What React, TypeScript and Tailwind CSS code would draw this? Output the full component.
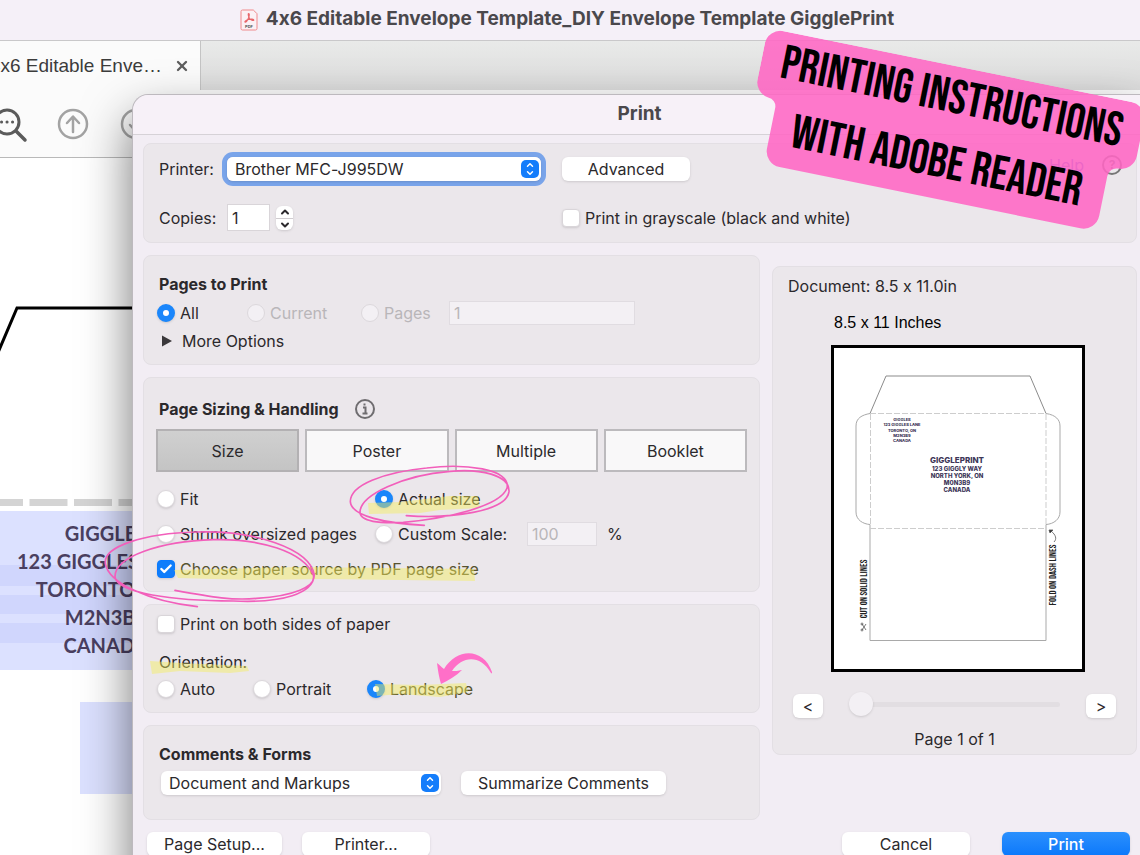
import { useState } from 'react'
import type { InputHTMLAttributes, ReactNode } from 'react'
import { Check, ChevronDown, ChevronUp, X } from 'lucide-react'
import clsx from 'clsx'

const SIZING_TABS = ['Size', 'Poster', 'Multiple', 'Booklet']

const RETURN_ADDRESS = ['GIGGLES', '123 GIGGLES LANE', 'TORONTO, ON', 'M2N3B9', 'CANADA']

interface ChoiceProps extends InputHTMLAttributes<HTMLInputElement> {
  label: string
  labelClass?: string
}

function Radio({ label, labelClass, ...props }: ChoiceProps) {
  return (
    <label className="flex h-6 items-center gap-[5px] whitespace-nowrap has-disabled:text-[#b9b6b9]">
      <input
        type="radio"
        className="size-[18px] shrink-0 appearance-none rounded-full border border-[#dcd8dc] bg-white shadow-sm checked:border-[6px] checked:border-[#1a86fb] disabled:bg-[#f3f0f4] disabled:shadow-none"
        {...props}
      />
      <span className={labelClass}>{label}</span>
    </label>
  )
}

function Checkbox({ label, labelClass, ...props }: ChoiceProps) {
  return (
    <label className="flex h-6 items-center gap-[5px] whitespace-nowrap">
      <span className="grid shrink-0 place-items-center">
        <input
          type="checkbox"
          className="peer col-start-1 row-start-1 size-[18px] appearance-none rounded border border-[#d9d5d9] bg-white shadow-sm checked:border-[#0a7aff] checked:bg-[#0f7dfb]"
          {...props}
        />
        <Check
          className="pointer-events-none invisible col-start-1 row-start-1 size-3.5 text-white peer-checked:visible"
          strokeWidth={4}
        />
      </span>
      <span className={labelClass}>{label}</span>
    </label>
  )
}

function PopupSelect({ id, value, className }: { id: string; value: string; className?: string }) {
  return (
    <div className={clsx('grid items-center', className)}>
      <select
        id={id}
        defaultValue={value}
        className="col-start-1 row-start-1 h-6 w-full appearance-none rounded-md bg-white px-2 shadow outline-none"
      >
        <option>{value}</option>
      </select>
      <span className="pointer-events-none col-start-1 row-start-1 mr-0.5 flex size-[18px] flex-col items-center justify-center justify-self-end rounded-[5px] bg-[#147dfb] text-white">
        <ChevronUp className="-mb-0.5 size-2.5" strokeWidth={3.5} />
        <ChevronDown className="size-2.5" strokeWidth={3.5} />
      </span>
    </div>
  )
}

function PushButton({ children, className }: { children: ReactNode; className?: string }) {
  return (
    <button
      type="button"
      className={clsx('h-6 shrink-0 rounded-md text-center leading-6 whitespace-nowrap shadow', className)}
    >
      {children}
    </button>
  )
}

function Group({ children, className }: { children: ReactNode; className?: string }) {
  return (
    <section className={clsx('rounded-lg border border-[#e3dfe4] bg-[#ebe7eb]', className)}>
      {children}
    </section>
  )
}

function TitleBar() {
  return (
    <header className="flex h-10 shrink-0 items-center justify-center gap-2 bg-[#f5f0f8] pt-px pr-1.5 pb-0.5 text-[19px] font-bold whitespace-nowrap text-[#4a484c]">
      <svg viewBox="0 0 18 22" className="h-[22px] w-[18px]" fill="none">
        <path
          d="M2.5 1h10.8L17 4.7v14.8a1.5 1.5 0 0 1-1.5 1.5h-13A1.5 1.5 0 0 1 1 19.5v-17A1.5 1.5 0 0 1 2.5 1Z"
          fill="#fbf1f5"
          stroke="#f08a8c"
        />
        <path
          d="M8.6 4.5c1 0 .8 2.6-.2 4.7-.9 2-2.3 4.1-3.2 3.9-1-.3.8-2 3.4-2.6 2.5-.6 5.2-.5 5.2.4 0 1-2.3.6-3.9-1.1C8.5 8.2 7.8 4.5 8.6 4.5Z"
          stroke="#e8666a"
          strokeWidth="1.2"
        />
        <text x="9" y="18.5" textAnchor="middle" fontSize="4" fontWeight="700" fill="#555">
          PDF
        </text>
      </svg>
      <h1>4x6 Editable Envelope Template_DIY Envelope Template GigglePrint</h1>
    </header>
  )
}

function TabStrip() {
  return (
    <div className="flex h-[50px] shrink-0 border-t border-[#c9c8ca] bg-linear-to-b from-[#e9eae9] to-[#dcdcdc]">
      <div className="flex w-[201px] items-center justify-end gap-3 overflow-hidden border-r border-[#c4c4c4] bg-[#fbfbfb] pt-px pr-2.5 font-['Liberation_Sans',sans-serif] text-[19px] whitespace-nowrap text-[#3c3c3c]">
        <span>4x6 Editable Enve…</span>
        <button type="button" aria-label="Close tab">
          <X className="size-4 text-[#5e5e5e]" strokeWidth={3.5} />
        </button>
      </div>
    </div>
  )
}

function Toolbar() {
  return (
    <div className="h-[68px] shrink-0 border-b border-[#b9b9b9] bg-[#fbfbfb]">
      <svg viewBox="0 0 160 67" className="h-[67px] w-40" fill="none" strokeLinecap="round">
        <g stroke="#5b5b5b" strokeWidth="3">
          <circle cx="7" cy="32" r="12" />
          <path d="m16 41 9 9" strokeWidth="3.5" />
          <path d="M1.5 32h.1M7 32h.1M12.5 32h.1" />
        </g>
        <g stroke="#a3a3a3" strokeWidth="2.5" strokeLinejoin="round">
          <circle cx="73" cy="34" r="14" />
          <path d="M73 42V27M67 33l6-6.5 6 6.5" />
          <circle cx="136" cy="34" r="14" />
          <path d="M136 26v15M130 35l6 6.5 6-6.5" />
        </g>
      </svg>
    </div>
  )
}

function DocumentPage() {
  return (
    <main className="grow bg-white">
      <svg viewBox="0 0 212 353" className="h-[353px] w-[212px]" fill="none">
        <path d="M-3 197 17 150H212" stroke="#000" strokeWidth="3" />
        <path d="M-15 344.5H212" stroke="#d4d4d4" strokeWidth="7" strokeDasharray="38 6.5" />
      </svg>
      <div className="h-[159px] w-[212px] bg-[#dce1ff] bg-[linear-gradient(180deg,transparent_54px,#d0d6fd_54px,#d0d6fd_75px,transparent_75px,transparent_84px,#d0d6fd_84px,#d0d6fd_103px,transparent_103px,transparent_112px,#d0d6fd_112px,#d0d6fd_132px,transparent_132px)] pt-2 text-center font-['Lato',sans-serif] text-xl leading-7 font-bold whitespace-nowrap text-[#4a3f60]">
        {RETURN_ADDRESS.map((line) => (
          <p key={line}>{line}</p>
        ))}
      </div>
      <div className="mt-8 ml-20 h-[92px] w-40 bg-[#dce1ff]" />
    </main>
  )
}

function PrinterGroup() {
  return (
    <Group className="flex items-start pt-[13px] pr-3.5 pb-[11px] pl-[15px]">
      <div className="grid grid-cols-[68px_335px_auto] items-center gap-y-[23px]">
        <label htmlFor="printer">Printer:</label>
        <PopupSelect
          id="printer"
          value="Brother MFC-J995DW"
          className="w-[314px] rounded-md ring-5 ring-[#79a4ea]"
        />
        <PushButton className="w-32 bg-white">Advanced</PushButton>
        <label htmlFor="copies">Copies:</label>
        <div className="flex items-center gap-1.5">
          <input
            id="copies"
            defaultValue="1"
            className="h-[27px] w-[43px] border border-[#d9d5d9] bg-white px-1"
          />
          <div className="flex h-6 w-[17px] flex-col divide-y divide-[#d0ccd0] rounded-md bg-white shadow">
            <button type="button" aria-label="More copies" className="flex flex-1 items-center justify-center">
              <ChevronUp className="size-3" strokeWidth={4} />
            </button>
            <button type="button" aria-label="Fewer copies" className="flex flex-1 items-center justify-center">
              <ChevronDown className="size-3" strokeWidth={4} />
            </button>
          </div>
        </div>
        <Checkbox label="Print in grayscale (black and white)" />
      </div>
      <a href="#help" className="-mt-1 ml-auto flex items-center gap-[18px] text-[#5b62d6]">
        Help
        <span className="flex size-5 items-center justify-center rounded-full border-2 border-[#777] text-xs font-bold text-[#777]">
          ?
        </span>
      </a>
    </Group>
  )
}

function PagesGroup() {
  return (
    <Group className="px-3 pt-[17px] pb-3">
      <h3 className="pl-[3px] leading-[22px] font-bold">Pages to Print</h3>
      <div className="mt-1.5 flex h-6 items-center pl-px">
        <div className="w-[90px]">
          <Radio name="pages" label="All" defaultChecked />
        </div>
        <div className="w-[114px]">
          <Radio name="pages" label="Current" disabled />
        </div>
        <div className="w-[88px]">
          <Radio name="pages" label="Pages" disabled />
        </div>
        <input
          aria-label="Page range"
          disabled
          defaultValue="1"
          className="h-6 w-[186px] border border-[#e0dce1] bg-[#f3f0f4] px-1 text-[#b9b6b9]"
        />
      </div>
      <button type="button" className="mt-[5px] flex items-center gap-2.5 pl-1.5 leading-[22px]">
        <svg viewBox="0 0 10 12" className="h-3 w-2.5" fill="#3a383b">
          <path d="M0 .5 10 6 0 11.5Z" />
        </svg>
        More Options
      </button>
    </Group>
  )
}

function SizingGroup() {
  const [tab, setTab] = useState('Size')

  return (
    <Group className="px-3 pt-[21px] pb-2.5">
      <h3 className="flex h-5 items-center gap-4 pl-[3px] font-bold">
        Page Sizing &amp; Handling
        <svg viewBox="0 0 20 20" className="size-5" fill="none" stroke="#6f6d70" strokeWidth="2">
          <circle cx="10" cy="10" r="9" />
          <path d="M8 8.5h2.5V14M7.5 14.5h5M9.5 4.5v2" />
        </svg>
      </h3>

      <div className="mt-2.5 grid grid-cols-4 gap-1.5">
        {SIZING_TABS.map((name) => (
          <button
            type="button"
            key={name}
            onClick={() => setTab(name)}
            className={clsx(
              'h-[43px] border-2',
              tab === name
                ? 'border-[#b3b1b3] bg-linear-to-b from-[#d0d0d0] to-[#c4c4c4]'
                : 'border-[#bcbabd] bg-[#f9f8f9]'
            )}
          >
            {name}
          </button>
        ))}
      </div>

      <div className="mt-[15px] grid grid-cols-[218px_auto] gap-y-[11px] pl-px">
        <Radio name="scale" label="Fit" />
        <Radio name="scale" label="Actual size" defaultChecked />
        <Radio name="scale" label="Shrink oversized pages" />
        <div className="flex h-6 items-center">
          <div className="w-[152px]">
            <Radio name="scale" label="Custom Scale:" />
          </div>
          <input
            aria-label="Custom scale percent"
            disabled
            defaultValue="100"
            className="mr-2.5 h-6 w-[70px] border border-[#e0dce1] bg-[#f3f0f4] px-1 text-[#b9b6b9]"
          />
          %
        </div>
        <div className="col-span-2">
          <Checkbox
            label="Choose paper source by PDF page size"
            labelClass="text-[#57532f]"
            defaultChecked
          />
        </div>
      </div>
    </Group>
  )
}

function OrientationGroup() {
  return (
    <Group className="px-3 pt-[7px] pb-[11px]">
      <div className="pl-px">
        <Checkbox label="Print on both sides of paper" />
      </div>
      <fieldset className="mt-3.5">
        <legend className="pl-[3px] leading-6">Orientation:</legend>
        <div className="mt-[3px] flex h-6 items-center pl-px">
          <div className="w-24">
            <Radio name="orientation" label="Auto" />
          </div>
          <div className="w-[114px]">
            <Radio name="orientation" label="Portrait" />
          </div>
          <Radio name="orientation" label="Landscape" labelClass="text-[#57532f]" defaultChecked />
        </div>
      </fieldset>
    </Group>
  )
}

function CommentsGroup() {
  return (
    <Group className="px-3 pt-[17px] pb-6">
      <h3 className="pl-[3px] leading-[22px] font-bold">
        <label htmlFor="comments">Comments &amp; Forms</label>
      </h3>
      <div className="mt-1.5 flex items-center gap-5 pl-[5px]">
        <PopupSelect id="comments" value="Document and Markups" className="w-[280px]" />
        <PushButton className="w-[205px] bg-white">Summarize Comments</PushButton>
      </div>
    </Group>
  )
}

function EnvelopePreview() {
  return (
    <svg
      viewBox="0 0 248 321"
      className="ml-[58px] h-[327px] w-[254px] border-[3px] border-black bg-white"
      fill="none"
      stroke="#a9a9a9"
    >
      <path d="M36 65.5 52 28H196L212 65.5" stroke="#8b8b8b" />
      <path d="M36 65.5C28 67 22 70 22 78V164C22 172 29 176 36 176.5V292.5H212V176.5C220 176 226 171 226 164V78C226 72 222 67 212 65.5" />
      <path
        d="M36 65.5H212M36.5 66V176M212 66V176M36 180.5H212"
        stroke="#cdcdcd"
        strokeDasharray="6 2"
      />
      <g stroke="none" fill="#3d3658" textAnchor="middle" fontWeight="800">
        <g fontSize="4">
          <text x="68" y="73">GIGGLES</text>
          <text x="68" y="78">123 GIGGLES LANE</text>
          <text x="68" y="84">TORONTO, ON</text>
          <text x="68" y="89">M2N3B9</text>
          <text x="68" y="94">CANADA</text>
        </g>
        <g fontSize="6">
          <text x="123" y="115" fontSize="8">GIGGLEPRINT</text>
          <text x="123" y="123">123 GIGGLY WAY</text>
          <text x="123" y="130">NORTH YORK, ON</text>
          <text x="123" y="137">M0N3B9</text>
          <text x="123" y="144">CANADA</text>
        </g>
      </g>
      <g
        stroke="none"
        fill="#222"
        textAnchor="middle"
        fontSize="10"
        fontFamily="'Bebas Neue', 'Liberation Sans Narrow', 'Liberation Sans', sans-serif"
      >
        <text transform="translate(33 241) rotate(-90)">CUT ON SOLID LINES</text>
        <text transform="translate(222 227) rotate(-90)">FOLD ON DASH LINES</text>
      </g>
      <g stroke="#555" strokeWidth="0.8">
        <path d="M32 276 28 282M32 282 28 276" />
        <circle cx="28" cy="276" r="1" />
        <circle cx="28" cy="282" r="1" />
        <path d="M220 194c3-3 2-7-3-11" />
        <path d="m215 182 4 0-3 3Z" fill="#333" />
      </g>
    </svg>
  )
}

function PreviewPanel() {
  return (
    <Group className="mt-[11px] w-[365px] shrink-0 self-start pt-[9px] pb-1">
      <p className="pl-[15px] leading-5">Document: 8.5 x 11.0in</p>
      <p className="mt-[17px] mb-3 pl-[61px] font-['Liberation_Sans',sans-serif] leading-5 text-black">
        8.5 x 11 Inches
      </p>
      <EnvelopePreview />
      <div className="mt-5 flex items-center justify-between px-5">
        <PushButton className="w-[30px] bg-white">&lt;</PushButton>
        <input
          type="range"
          aria-label="Preview page"
          min="1"
          max="2"
          defaultValue="1"
          className="mx-[26px] mb-1 h-6 min-w-0 grow appearance-none bg-transparent [&::-webkit-slider-runnable-track]:h-[5px] [&::-webkit-slider-runnable-track]:rounded-full [&::-webkit-slider-runnable-track]:bg-[#e2dee2] [&::-webkit-slider-thumb]:-mt-[10px] [&::-webkit-slider-thumb]:size-6 [&::-webkit-slider-thumb]:appearance-none [&::-webkit-slider-thumb]:rounded-full [&::-webkit-slider-thumb]:bg-[#f3f0f4] [&::-webkit-slider-thumb]:shadow"
        />
        <PushButton className="w-[30px] bg-white">&gt;</PushButton>
      </div>
      <p className="mt-2 text-center leading-[22px]">Page 1 of 1</p>
    </Group>
  )
}

function PrintDialog() {
  return (
    <div
      role="dialog"
      aria-labelledby="print-title"
      className="absolute top-[94px] right-0 left-[132px] rounded-tl-2xl border-t border-l border-[#bdb9be] bg-[#f2edf4] pb-10 text-base text-[#2b292c] shadow-[0_24px_50px_rgba(0,0,0,0.55)]"
    >
      <h2
        id="print-title"
        className="flex h-10 items-center justify-center rounded-tl-2xl border-b border-[#d6d2d7] bg-[#f7f1f8] pb-px pl-1.5 text-[19px] font-bold text-[#4a484c]"
      >
        Print
      </h2>
      <div className="pt-2 pr-[3px] pl-2.5">
        <PrinterGroup />
        <div className="mt-3 flex gap-3">
          <div className="flex min-w-0 grow flex-col gap-3">
            <PagesGroup />
            <SizingGroup />
            <OrientationGroup />
            <CommentsGroup />
          </div>
          <PreviewPanel />
        </div>
        <footer className="mt-3 flex pr-[7px] pl-1">
          <PushButton className="mr-5 w-[135px] bg-white">Page Setup...</PushButton>
          <PushButton className="w-32 bg-white">Printer...</PushButton>
          <PushButton className="mr-8 ml-auto w-32 bg-white">Cancel</PushButton>
          <PushButton className="w-32 bg-linear-to-b from-[#2a90fd] to-[#0a78fb] font-medium text-white">
            Print
          </PushButton>
        </footer>
      </div>
    </div>
  )
}

// Hand-drawn marker strokes over the options that have to be set
function Annotations() {
  return (
    <svg className="pointer-events-none absolute inset-0 size-full" fill="none">
      <g fill="#f6ef5c" opacity="0.45">
        <path d="M368 503 400 502 450 496H478L480 508 440 510 420 513 369 514Z" />
        <path d="M174 570 300 567 474 569 475 581 400 580 320 579 250 580 178 578Z" />
        <path d="M150 661 180 663 247 666 249 671 230 673 180 671 152 674Z" />
        <path d="M375 684 420 685 466 683 468 692 440 697 400 694 377 696Z" />
      </g>
      <g stroke="#f25fbb" strokeLinecap="round" strokeWidth="5">
        <path
          transform="translate(340 385) scale(0.3333)"
          d="M199 392C330 402 500 380 507 320C510 270 420 250 330 259C190 270 60 330 60 382C60 410 120 416 190 412C320 400 480 365 501 310C515 250 370 235 260 249C130 262 30 300 31 350C34 395 140 415 253 421"
        />
        <path
          transform="translate(0 480) scale(0.3333)"
          d="M525 331C640 352 700 362 770 355C880 348 950 320 940 285C910 215 780 175 640 179C480 184 345 230 345 290C350 340 520 362 700 363C850 370 940 340 943 285C930 205 760 150 590 156C430 160 310 200 316 250C325 310 450 365 592 380"
        />
      </g>
      <path
        d="M437 663C438 671 439 677 441 684C449 680 456 676 462 670C458 671 455 671 452 671C462 656 480 654 491 673C492 674 492 673 492 672C484 648 457 647 444 669C441 667 440 665 437 663Z"
        fill="#ff6fc8"
      />
    </svg>
  )
}

function Sticker() {
  return (
    <svg
      viewBox="0 0 388 135"
      className="pointer-events-none absolute top-7 -right-4 h-[135px] w-[388px] origin-top-left rotate-[11.5deg]"
    >
      <path
        d="M16 0H371a16 16 0 0 1 16 16V52a16 16 0 0 1-16 16a9 9 0 0 0-9 9V118a16 16 0 0 1-16 16H39a16 16 0 0 1-16-16V77a9 9 0 0 0-9-9a16 16 0 0 1-14-16V16a16 16 0 0 1 16-16Z"
        fill="#ff66c4"
        opacity="0.88"
      />
      <g
        textAnchor="middle"
        fontFamily="'Bebas Neue', 'Liberation Sans Narrow', 'Roboto Condensed', 'Liberation Sans', sans-serif"
        fontSize="48"
      >
        <text x="194" y="46">PRINTING INSTRUCTIONS</text>
        <text x="192" y="112">WITH ADOBE READER</text>
      </g>
    </svg>
  )
}

export default function App() {
  return (
    <div className="relative flex h-screen flex-col overflow-hidden bg-white font-['Inter',sans-serif] [font-feature-settings:'calt'_0]">
      <TitleBar />
      <TabStrip />
      <Toolbar />
      <DocumentPage />
      <PrintDialog />
      <Annotations />
      <Sticker />
    </div>
  )
}
